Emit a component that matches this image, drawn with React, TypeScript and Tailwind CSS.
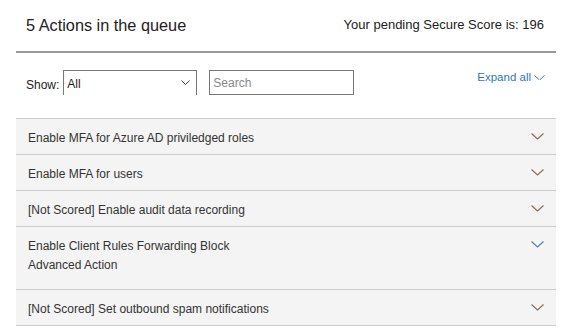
import { useState } from "react"

interface Acao {
    titulo: string
    subtitulo?: string
    cor: string
}

const acoes: Acao[] = [
    { titulo: "Enable MFA for Azure AD priviledged roles", cor: "#8a6a55" },
    { titulo: "Enable MFA for users", cor: "#8a6a55" },
    { titulo: "[Not Scored] Enable audit data recording", cor: "#8a6a55" },
    { titulo: "Enable Client Rules Forwarding Block", subtitulo: "Advanced Action", cor: "#4f7ea8" },
    { titulo: "[Not Scored] Set outbound spam notifications", cor: "#8a6a55" },
]

function Chevron({ cor, largura = 13 }: { cor: string; largura?: number }) {
    return (
        <svg width={largura} height={largura / 2} viewBox="0 0 13 6.5" fill="none">
            <path d="M0.5 0.5 L6.5 6 L12.5 0.5" stroke={cor} strokeWidth="1.1" />
        </svg>
    )
}

function App() {
    const [filtro, setFiltro] = useState("All")
    const [busca, setBusca] = useState("")

    return (
        <div className="w-[572px] h-[330px] bg-white text-[#333] font-['Liberation_Sans',Arial,sans-serif] px-4">
            {/* Cabeçalho */}
            <div className="flex items-start justify-between h-[53px] border-b-2 border-[#999]">
                <h1 className="text-[16.3px] text-[#222] pl-[10px] pt-[13px]">5 Actions in the queue</h1>
                <p className="text-[13px] text-[#222] pt-[15px] pr-[12px]">Your pending Secure Score is: 196</p>
            </div>

            {/* Filtros */}
            <div className="flex items-start h-[66px] pt-[16px] pl-[10px] border-b border-[#ccc]">
                <label className="text-[12px] text-[#222] mt-[7px] mr-[4px]">Show:</label>
                <div className="relative w-[134px] h-[25px] border border-[#777] mt-[1px]">
                    <select
                        value={filtro}
                        onChange={(e) => setFiltro(e.target.value)}
                        className="appearance-none w-full h-full pl-[3px] text-[12px] text-[#222] bg-white outline-none"
                    >
                        <option>All</option>
                    </select>
                    <svg className="absolute right-[6px] top-[9px] pointer-events-none" width="9" height="5" viewBox="0 0 9 5" fill="none">
                        <path d="M0.5 0.5 L4.5 4.5 L8.5 0.5" stroke="#444" strokeWidth="1" />
                    </svg>
                </div>
                <input
                    value={busca}
                    onChange={(e) => setBusca(e.target.value)}
                    placeholder="Search"
                    className="ml-[12px] mt-[1px] w-[145px] h-[25px] border border-[#777] px-[3px] text-[12px] placeholder:text-[#888] outline-none"
                />
                <button className="ml-auto mr-[11px] flex items-center gap-[3px] text-[11.5px] text-[#2b79c4]">
                    Expand all
                    <Chevron cor="#2b79c4" largura={11} />
                </button>
            </div>

            {/* Lista de ações */}
            <div className="flex flex-col">
                {acoes.map((acao) => (
                    <div
                        key={acao.titulo}
                        className={`flex justify-between bg-[#f4f4f4] border-b border-[#ccc] pl-[12px] pr-[12px] pt-[10px] ${acao.subtitulo ? "h-[63px]" : "h-[36px]"}`}
                    >
                        <div className="text-[12px] text-[#333]">
                            <p>{acao.titulo}</p>
                            {acao.subtitulo && <p className="mt-[1px]">{acao.subtitulo}</p>}
                        </div>
                        <div className="pt-[4px]">
                            <Chevron cor={acao.cor} />
                        </div>
                    </div>
                ))}
            </div>
        </div>
    )
}

export default App
